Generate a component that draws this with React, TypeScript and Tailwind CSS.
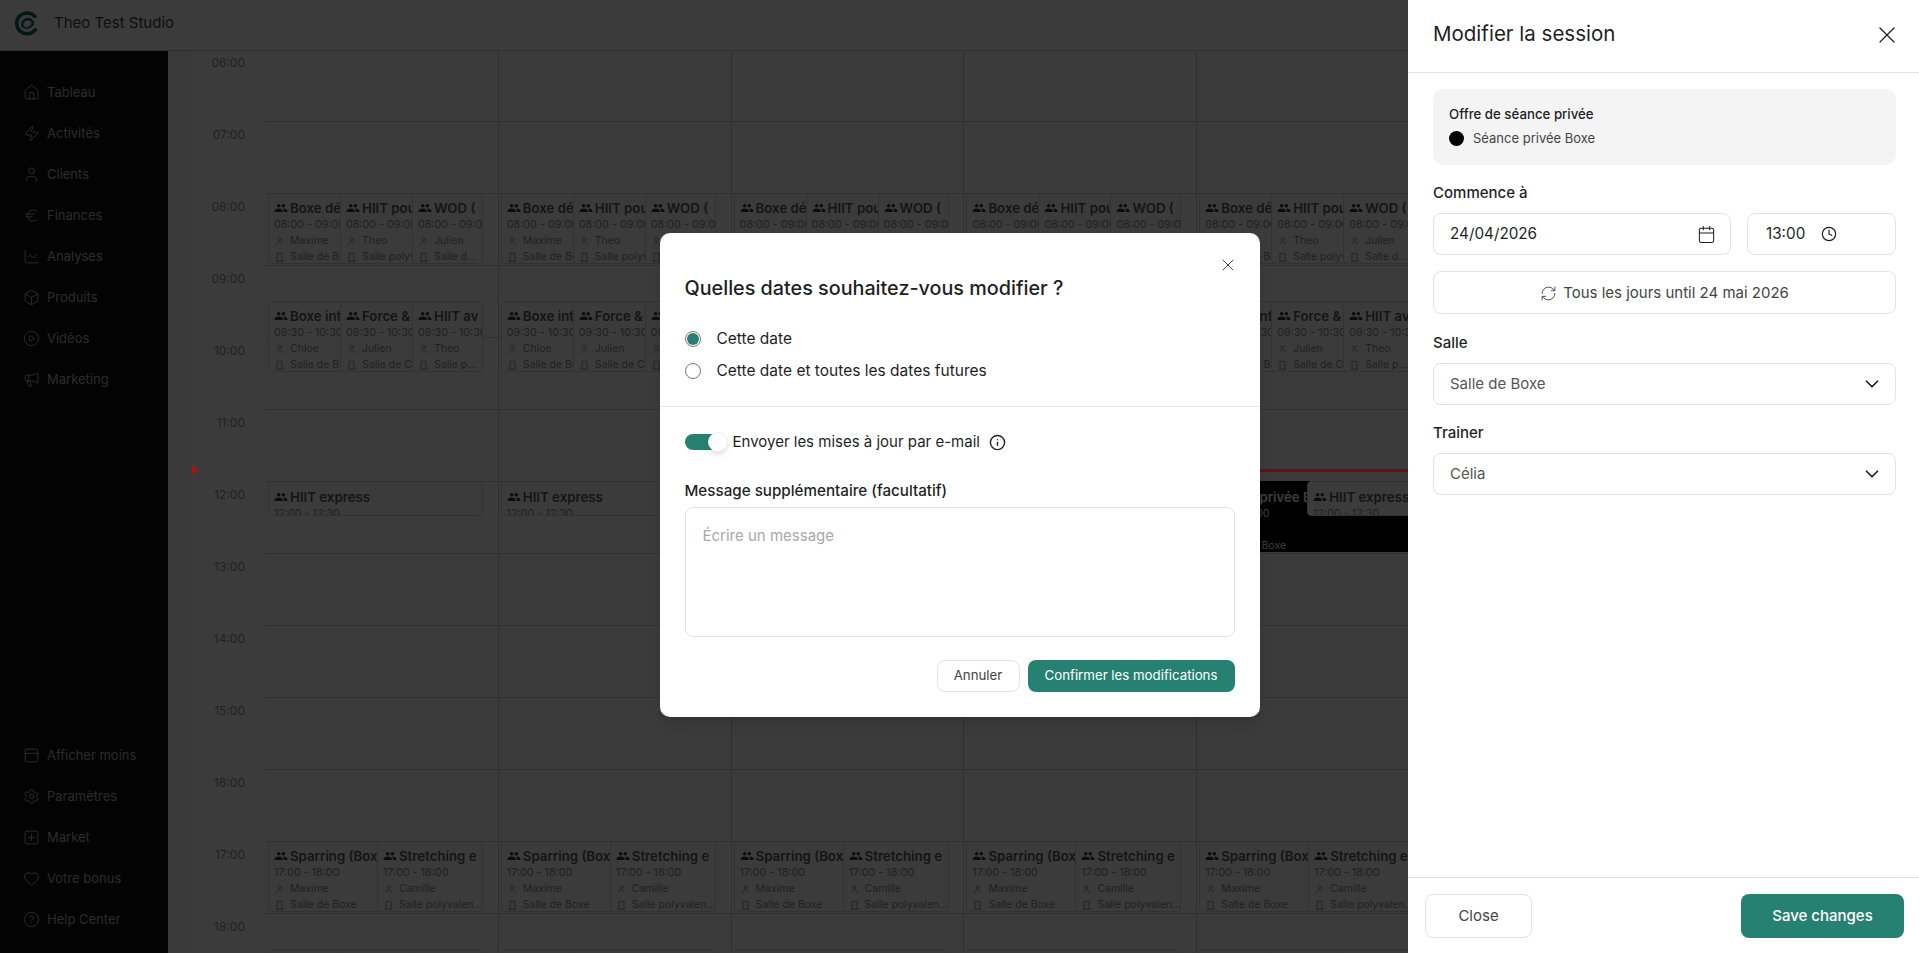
import {
  House,
  Zap,
  User,
  Euro,
  ChartLine,
  Box,
  CirclePlay,
  Megaphone,
  PanelTop,
  Settings,
  SquarePlus,
  Heart,
  CircleHelp,
  X,
  Calendar,
  Clock,
  RefreshCw,
  ChevronDown,
  Info,
} from "lucide-react";
import { MdPeople } from "react-icons/md";

const HOUR = 72;
const START = 6;

const mainNav = [
  { label: "Tableau", icon: House },
  { label: "Activités", icon: Zap },
  { label: "Clients", icon: User },
  { label: "Finances", icon: Euro },
  { label: "Analyses", icon: ChartLine },
  { label: "Produits", icon: Box },
  { label: "Vidéos", icon: CirclePlay },
  { label: "Marketing", icon: Megaphone },
];

const bottomNav = [
  { label: "Afficher moins", icon: PanelTop },
  { label: "Paramètres", icon: Settings },
  { label: "Market", icon: SquarePlus },
  { label: "Votre bonus", icon: Heart },
  { label: "Help Center", icon: CircleHelp },
];

type Session = {
  title: string;
  time: string;
  trainer?: string;
  room?: string;
  start: number;
  minutes: number;
  left: number;
  width: number;
  dark?: boolean;
};

const sessions: Session[] = [
  { title: "Boxe débutants", time: "08:00 - 09:00", trainer: "Maxime", room: "Salle de Boxe", start: 8, minutes: 59, left: 2, width: 100 },
  { title: "HIIT pour tous", time: "08:00 - 09:00", trainer: "Theo", room: "Salle polyvalente", start: 8, minutes: 59, left: 74, width: 100 },
  { title: "WOD (", time: "08:00 - 09:00", trainer: "Julien", room: "Salle d...", start: 8, minutes: 59, left: 146, width: 71 },
  { title: "Boxe intermédiaire", time: "09:30 - 10:30", trainer: "Chloe", room: "Salle de Boxe", start: 9.5, minutes: 59, left: 2, width: 100 },
  { title: "Force & cardio", time: "09:30 - 10:30", trainer: "Julien", room: "Salle de CrossFit", start: 9.5, minutes: 59, left: 74, width: 100 },
  { title: "HIIT av", time: "09:30 - 10:30", trainer: "Theo", room: "Salle p...", start: 9.5, minutes: 59, left: 146, width: 71 },
  { title: "HIIT express", time: "12:00 - 12:30", start: 12, minutes: 29, left: 2, width: 215 },
  { title: "Sparring (Boxe)", time: "17:00 - 18:00", trainer: "Maxime", room: "Salle de Boxe", start: 17, minutes: 59, left: 2, width: 125 },
  { title: "Stretching e", time: "17:00 - 18:00", trainer: "Camille", room: "Salle polyvalen...", start: 17, minutes: 59, left: 111, width: 106 },
  { title: "Boxe", time: "18:30 - 19:30", start: 18.5, minutes: 60, left: 2, width: 100 },
  { title: "HIIT", time: "18:30 - 19:30", start: 18.5, minutes: 60, left: 74, width: 100 },
  { title: "WOD", time: "18:30 - 19:30", start: 18.5, minutes: 60, left: 146, width: 71 },
];

// today's column has the private session and a shorter express card
const todaySessions: Session[] = [
  ...sessions.filter((s) => s.title !== "HIIT express"),
  { title: "Séance privée Boxe", time: "12:00 - 13:00", trainer: "Célia", room: "Salle de Boxe", start: 12, minutes: 59, left: 0, width: 233, dark: true },
  { title: "HIIT express", time: "12:00 - 12:30", start: 12, minutes: 29, left: 110, width: 123 },
];

function DoorIcon() {
  return (
    <svg viewBox="0 0 10 12" className="h-[10px] w-[9px] shrink-0" fill="none" stroke="currentColor" strokeWidth="1.1">
      <path d="M2 11V1.5h6V11M0.5 11h9" />
    </svg>
  );
}

function SessionCard({ s }: { s: Session }) {
  const roomy = s.dark || s.minutes < 40;
  const detail = s.dark ? "text-white" : "text-[#8c8c8c]";
  return (
    <div
      className={`absolute overflow-hidden rounded-[4px] border pl-[5px] ${roomy ? "pt-[6px]" : "pt-[5px]"} ${
        s.dark ? "border-black bg-black text-white" : "border-[#d9d9d9] bg-white text-[#5c5c5c]"
      }`}
      style={{
        top: (s.start - START) * HOUR - 1,
        height: (s.minutes / 60) * HOUR,
        left: s.left,
        width: s.width,
      }}
    >
      <div className={`flex items-center gap-[2px] text-[13.25px] leading-[18px] font-semibold whitespace-nowrap ${s.dark ? "ml-[5px]" : ""}`}>
        {!s.dark && <MdPeople className="h-[14px] w-[14px] shrink-0 text-[#3a3a3a]" />}
        <span>{s.title}</span>
      </div>
      <div className={`text-[10.75px] leading-[16px] whitespace-nowrap ${detail}`}>{s.time}</div>
      {s.trainer && (
        <div className={`flex items-center gap-[6px] text-[10.5px] leading-[16px] whitespace-nowrap ${detail}`}>
          <User className="ml-[1px] h-[10px] w-[9px] shrink-0" />
          {s.trainer}
        </div>
      )}
      {s.room && (
        <div className={`flex items-center gap-[6px] text-[10.5px] leading-[16px] whitespace-nowrap ${detail}`}>
          <span className="ml-[1px]">
            <DoorIcon />
          </span>
          {s.room}
        </div>
      )}
    </div>
  );
}

function DayColumn({ items, today }: { items: Session[]; today?: boolean }) {
  return (
    <div className="relative w-[232.8px] shrink-0 border-r border-[#cfcfcf]">
      {Array.from({ length: 14 }).map((_, i) => (
        <div key={i} className="h-[72px] border-b border-[#cfcfcf]" />
      ))}
      {items.map((s, i) => (
        <SessionCard key={i} s={s} />
      ))}
      {today && <div className="absolute inset-x-0 top-[419px] z-10 h-[3px] bg-[#6e0c12]" />}
    </div>
  );
}

function Logo() {
  return (
    <svg viewBox="0 0 24 24" className="h-[25px] w-[25px]" fill="none">
      <path d="M20 5.2A10 10 0 1 0 20.5 18" stroke="#0f6b5c" strokeWidth="3.4" strokeLinecap="round" />
      <path d="M8 14.5C7 9.5 12 6.5 16 8.5c2 1 2.5 3 1.5 4.5" stroke="#0f6b5c" strokeWidth="2.4" strokeLinecap="round" />
      <path d="M8 14.5c3 2.5 7 2 10-1.5" stroke="#14806e" strokeWidth="2" strokeLinecap="round" />
    </svg>
  );
}

function NavItem({ label, icon: Icon }: { label: string; icon: typeof House }) {
  return (
    <div className="flex h-[41px] items-center gap-[7px] pl-[23px] text-[13px] text-[#b8b8b8]">
      <Icon className="h-[17px] w-[17px] shrink-0" strokeWidth={1.4} />
      {label}
    </div>
  );
}

function Field({ children, className = "" }: { children: React.ReactNode; className?: string }) {
  return (
    <div className={`flex h-[42px] items-center rounded-[8px] border border-[#e2e2e2] bg-white text-[15.25px] ${className}`}>
      {children}
    </div>
  );
}

function SessionPanel() {
  return (
    <aside className="absolute inset-y-0 right-0 z-20 flex w-[511px] flex-col bg-white text-[#1f1f1f]">
      <div className="flex h-[73px] shrink-0 items-center justify-between border-b border-[#e2e2e2] pr-[18px] pb-[3px] pl-[25px]">
        <h2 className="text-[20.5px] font-normal">Modifier la session</h2>
        <X className="h-[28px] w-[28px]" strokeWidth={1.1} />
      </div>

      <div className="flex flex-1 flex-col pt-[16px] pr-[23px] pl-[25px]">
        <div className="h-[76px] rounded-[10px] bg-[#f4f4f4] px-[16px] pt-[16px]">
          <div className="text-[13.25px] leading-[18px] font-medium">Offre de séance privée</div>
          <div className="mt-[6px] flex items-center gap-[9px] text-[13px] leading-[18px] text-[#444]">
            <span className="h-[15px] w-[15px] rounded-full bg-black" />
            Séance privée Boxe
          </div>
        </div>

        <label className="mt-[18px] mb-[10px] text-[15px] leading-[20px] font-medium">Commence à</label>
        <div className="flex gap-[16px]">
          <Field className="w-[298px] justify-between pr-[14px] pl-[16px]">
            24/04/2026
            <Calendar className="h-[19px] w-[19px]" strokeWidth={1.3} />
          </Field>
          <Field className="w-[149px] gap-[16px] pl-[18px]">
            13:00
            <Clock className="h-[16px] w-[16px]" strokeWidth={1.8} />
          </Field>
        </div>
        <button className="mt-[16px] flex h-[43px] items-center justify-center gap-[6px] rounded-[8px] border border-[#e2e2e2] pt-[1px] text-[15px] text-[#444]">
          <RefreshCw className="h-[17px] w-[17px]" strokeWidth={1.3} />
          Tous les jours until 24 mai 2026
        </button>

        <label className="mt-[19px] mb-[10px] text-[15px] leading-[20px] font-medium">Salle</label>
        <Field className="justify-between pr-[12px] pl-[16px] text-[15px] text-[#555]">
          Salle de Boxe
          <ChevronDown className="h-[22px] w-[22px] text-[#1f1f1f]" strokeWidth={1.9} />
        </Field>

        <label className="mt-[18px] mb-[10px] text-[15px] leading-[20px] font-medium">Trainer</label>
        <Field className="justify-between pr-[12px] pl-[16px] text-[15px] text-[#555]">
          Célia
          <ChevronDown className="h-[22px] w-[22px] text-[#1f1f1f]" strokeWidth={1.9} />
        </Field>
      </div>

      <div className="flex h-[76px] shrink-0 items-start justify-between border-t border-[#e2e2e2] pt-[16px] pr-[15px] pl-[17px]">
        <button className="h-[44px] w-[107px] rounded-[8px] border border-[#e2e2e2] text-[15px] text-[#444]">Close</button>
        <button className="h-[44px] w-[163px] rounded-[8px] bg-[#278172] text-[15px] font-medium text-white">Save changes</button>
      </div>
    </aside>
  );
}

function ConfirmDialog() {
  return (
    <div className="relative z-20 flex h-[484px] w-[600px] flex-col rounded-[10px] bg-white text-[#1f1f1f] shadow-lg">
      <X className="absolute top-[22px] right-[22px] h-[20px] w-[20px] text-[#444]" strokeWidth={1.2} />
      <div className="h-[174px] border-b border-[#e8e8e8] px-[25px] pt-[41px]">
        <h3 className="text-[19.75px] leading-[28px] font-medium">Quelles dates souhaitez-vous modifier ?</h3>
        <div className="mt-[21px] flex h-[32px] items-center gap-[16px] text-[15.5px]">
          <span className="flex h-[16px] w-[16px] items-center justify-center rounded-full border border-[#777]">
            <span className="h-[12px] w-[12px] rounded-full bg-[#278172]" />
          </span>
          Cette date
        </div>
        <div className="flex h-[32px] items-center gap-[16px] text-[15.5px]">
          <span className="h-[16px] w-[16px] rounded-full border border-[#777]" />
          Cette date et toutes les dates futures
        </div>
      </div>

      <div className="flex flex-1 flex-col px-[25px] pt-[23px]">
        <div className="flex h-[24px] items-center text-[15px]">
          <span className="relative mr-[5px] h-[16px] w-[38px] rounded-full bg-[#278172]">
            <span className="absolute top-[-2px] right-[-5px] h-[20px] w-[20px] rounded-full border border-[#eee] bg-white shadow-md" />
          </span>
          <span className="ml-[5px]">Envoyer les mises à jour par e-mail</span>
          <Info className="ml-[9px] h-[17px] w-[17px] text-[#222]" strokeWidth={2} />
        </div>
        <label className="mt-[27px] text-[15.2px] leading-[20px] font-medium">Message supplémentaire (facultatif)</label>
        <div className="mt-[6px] h-[130px] rounded-[8px] border border-[#e2e2e2] px-[17px] pt-[18px] text-[15px] leading-[20px] text-[#a8a8a8]">
          Écrire un message
        </div>
        <div className="mt-[23px] flex justify-end gap-[8px]">
          <button className="h-[32px] w-[83px] rounded-[8px] border border-[#e2e2e2] text-[13.25px] text-[#444]">Annuler</button>
          <button className="h-[32px] w-[207px] rounded-[8px] bg-[#278172] text-[13.25px] text-white">
            Confirmer les modifications
          </button>
        </div>
      </div>
    </div>
  );
}

export default function App() {
  return (
    <div className="relative h-[953px] overflow-hidden bg-white font-['Inter',sans-serif]">
      {/* Page behind the overlay */}
      <header className="flex h-[51px] items-center gap-[15px] border-b border-[#cfcfcf] pb-[4px] pl-[14px] text-[#444]">
        <Logo />
        <span className="text-[15px]">Theo Test Studio</span>
      </header>

      <div className="flex h-[902px]">
        <nav className="flex w-[168px] shrink-0 flex-col justify-between bg-[#0f1015] pt-[21px] pb-[13px]">
          <div>
            {mainNav.map((item) => (
              <NavItem key={item.label} {...item} />
            ))}
          </div>
          <div>
            {bottomNav.map((item) => (
              <NavItem key={item.label} {...item} />
            ))}
          </div>
        </nav>

        <div className="w-[24px] shrink-0 bg-[#f4f6f8]" />

        <div className="flex flex-1 overflow-hidden">
          <div className="relative w-[74px] shrink-0">
            {Array.from({ length: 14 }).map((_, i) => (
              <div key={i} className="h-[72px] pt-[4px] pr-[21px] text-right text-[12px] leading-[16px] text-[#909090]">
                {String(START + i).padStart(2, "0")}:00
              </div>
            ))}
            <span className="absolute top-[414px] left-0 z-10 h-0 w-0 border-y-[5px] border-l-[7px] border-y-transparent border-l-[#a81418]" />
          </div>
          <div className="-mt-[1px] flex">
            <DayColumn items={sessions} />
            <DayColumn items={sessions} />
            <DayColumn items={sessions} />
            <DayColumn items={sessions} />
            <DayColumn items={todaySessions} today />
          </div>
        </div>
      </div>

      {/* Overlay, dialog and side panel */}
      <div className="absolute inset-0 flex items-center justify-center bg-black/[0.77] pb-[3px]">
        <ConfirmDialog />
      </div>
      <SessionPanel />
    </div>
  );
}
